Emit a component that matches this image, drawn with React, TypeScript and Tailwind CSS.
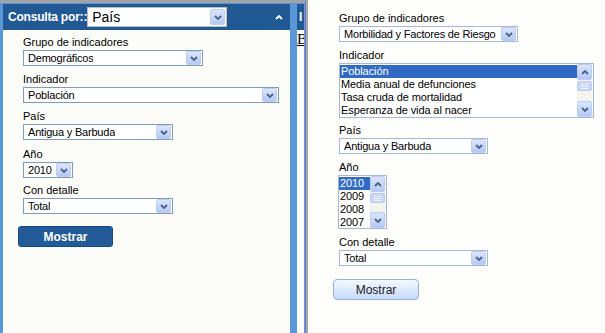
import React from "react";

const font = { fontFamily: '"Liberation Sans", Arial, sans-serif' };

function Chevron({ up = false, color = "#4d6185" }: { up?: boolean; color?: string }) {
  return (
    <svg width="8" height="5" viewBox="0 0 8 5">
      <polyline
        points={up ? "1,4 4,1 7,4" : "1,1 4,4 7,1"}
        fill="none"
        stroke={color}
        strokeWidth="1.8"
      />
    </svg>
  );
}

function DropBtn({ up = false, h = "h-[14px]" }: { up?: boolean; h?: string }) {
  return (
    <div
      className={`flex w-[15px] ${h} shrink-0 items-center justify-center rounded-[2px] border border-[#bccdf0] bg-gradient-to-b from-[#dbe6fd] to-[#b5c9f5]`}
    >
      <Chevron up={up} />
    </div>
  );
}

function Select({ value, w, light = false }: { value: string; w: string; light?: boolean }) {
  return (
    <div
      className={`flex h-[16px] ${w} items-center justify-between border ${
        light ? "border-[#a5b9d4]" : "border-[#7f9db9]"
      } bg-white pl-[4px] pr-[1px]`}
    >
      <span className="overflow-hidden whitespace-nowrap text-[11px] leading-[14px] tracking-[-0.2px] text-black">
        {value}
      </span>
      <DropBtn />
    </div>
  );
}

function Scrollbar() {
  return (
    <div className="flex w-[16px] shrink-0 flex-col bg-[#f4f3ee]">
      <DropBtn up h="h-[16px]" />
      <div className="mt-[1px] flex h-[10px] w-[15px] flex-col items-center justify-center gap-[1px] rounded-[2px] border border-[#bccdf0] bg-[#c8d7f8]">
        <div className="h-px w-[7px] bg-[#eef3fd]" />
        <div className="h-px w-[7px] bg-[#eef3fd]" />
        <div className="h-px w-[7px] bg-[#eef3fd]" />
      </div>
      <div className="flex-1" />
      <DropBtn h="h-[16px]" />
    </div>
  );
}

function ListBox({ items, w, h }: { items: string[]; w: string; h: string }) {
  return (
    <div className={`flex ${w} ${h} border border-[#a5b9d4] bg-white`}>
      <div className="flex-1 overflow-hidden pt-[1px]">
        {items.map((it, i) => (
          <div
            key={it}
            className={`h-[13px] whitespace-nowrap pl-[1px] text-[11px] leading-[13px] tracking-[-0.1px] ${
              i === 0 ? "bg-[#316ac5] text-white" : "text-black"
            }`}
          >
            {it}
          </div>
        ))}
      </div>
      <Scrollbar />
    </div>
  );
}

function Label({ children }: { children: React.ReactNode }) {
  return <div className="h-[15px] whitespace-nowrap text-[11px] leading-[14px] text-black">{children}</div>;
}

export default function App() {
  return (
    <div className="flex h-[333px] w-[605px] overflow-hidden bg-[#fbfcf7]" style={font}>
      {/* left frames */}
      <div className="flex h-full w-[305px] shrink-0 flex-col border-t-[3px] border-[#a3a3a3] bg-[#5a96d8]">
        <div className="mt-[1px] flex flex-1">
          <div className="ml-[3px] flex w-[287px] flex-col">
            <div className="flex h-[26px] items-center bg-[#215994] pl-[5px]">
              <span className="text-[12px] font-bold tracking-[-0.2px] text-white">Consulta por::</span>
              <div className="flex h-[20px] w-[140px] items-center justify-between border border-[#b9bec6] bg-white pl-[4px] pr-[1px]">
                <span className="text-[14px] leading-[18px] text-black">País</span>
                <DropBtn h="h-[16px]" />
              </div>
              <div className="ml-auto mr-[7px] flex items-center">
                <Chevron up color="#ffffff" />
              </div>
            </div>
            <div className="flex flex-1 flex-col bg-[#fbfcf7] pl-[18px] pt-[5px]">
              <div className="ml-[2px] mb-[6px]">
                <Label>Grupo de indicadores</Label>
                <Select value="Demográficos" w="w-[180px]" />
              </div>
              <div className="ml-[2px] mb-[6px]">
                <Label>Indicador</Label>
                <Select value="Población" w="w-[256px]" />
              </div>
              <div className="ml-[2px] mb-[7px]">
                <Label>País</Label>
                <Select value="Antigua y Barbuda" w="w-[150px]" />
              </div>
              <div className="ml-[2px] mb-[5px]">
                <Label>Año</Label>
                <Select value="2010" w="w-[50px]" />
              </div>
              <div className="ml-[2px]">
                <Label>Con detalle</Label>
                <Select value="Total" w="w-[150px]" />
              </div>
              <button className="-ml-[3px] mt-[12px] h-[21px] w-[95px] rounded-[3px] border border-[#164a85] bg-[#225b98] text-[12px] font-bold text-white">
                Mostrar
              </button>
            </div>
          </div>
          <div className="ml-[7px] flex w-[7px] flex-col overflow-hidden">
            <div className="h-[26px] bg-[#215994] pl-[2px] text-[12px] font-bold leading-[26px] text-white">I</div>
            <div
              className="flex-1 bg-[#fbfcf7] text-[15px] leading-[18px] text-black underline"
              style={{ fontFamily: '"Liberation Serif", serif' }}
            >
              B
            </div>
          </div>
        </div>
      </div>
      <div className="w-px shrink-0 bg-[#7b7bd0]" />
      <div className="w-[2px] shrink-0 bg-[#a6a6a6]" />

      {/* right frame */}
      <div className="flex flex-1 flex-col bg-[#fdfdfb] pl-[31px] pt-[11px]">
        <Label>Grupo de indicadores</Label>
        <Select value="Morbilidad y Factores de Riesgo" w="w-[179px]" light />
        <div className="mt-[6px]">
          <Label>Indicador</Label>
          <ListBox
            items={["Población", "Media anual de defunciones", "Tasa cruda de mortalidad", "Esperanza de vida al nacer"]}
            w="w-[255px]"
            h="h-[55px]"
          />
        </div>
        <div className="mt-[5px]">
          <Label>País</Label>
          <Select value="Antigua y Barbuda" w="w-[149px]" light />
        </div>
        <div className="mt-[6px]">
          <Label>Año</Label>
          <div className="-ml-px">
            <ListBox items={["2010", "2009", "2008", "2007"]} w="w-[49px]" h="h-[54px]" />
          </div>
        </div>
        <div className="mt-[6px]">
          <Label>Con detalle</Label>
          <Select value="Total" w="w-[149px]" light />
        </div>
        <button className="-ml-[6px] mt-[13px] h-[21px] w-[86px] rounded-[4px] border border-[#93b2e2] bg-gradient-to-b from-[#f6f9fe] to-[#c6daf9] text-[12px] text-[#1b1b1b]">
          Mostrar
        </button>
      </div>
    </div>
  );
}
